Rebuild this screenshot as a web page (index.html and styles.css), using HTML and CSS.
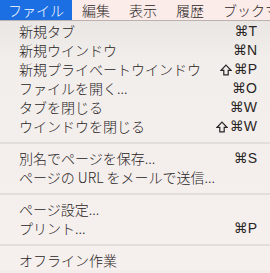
FILE: index.html
```html
<!DOCTYPE html>
<html lang="ja">
<head>
<meta charset="utf-8">
<link rel="stylesheet" href="styles.css">
</head>
<body>
<div class="menubar">
  <span class="mitem active">ファイル</span>
  <span class="mitem">編集</span>
  <span class="mitem">表示</span>
  <span class="mitem">履歴</span>
  <span class="mitem">ブックマーク</span>
</div>
<div class="menu">
  <div class="row"><span>新規タブ</span><span class="key">⌘T</span></div>
  <div class="row"><span>新規ウインドウ</span><span class="key">⌘N</span></div>
  <div class="row"><span>新規プライベートウインドウ</span><span class="key"><svg class="shift" viewBox="0 0 12 12" width="12" height="12"><path d="M6 1.2 L11 6.4 H8.2 V10.8 H3.8 V6.4 H1 Z"/></svg>⌘P</span></div>
  <div class="row"><span>ファイルを開く...</span><span class="key">⌘O</span></div>
  <div class="row"><span>タブを閉じる</span><span class="key">⌘W</span></div>
  <div class="row"><span>ウインドウを閉じる</span><span class="key"><svg class="shift" viewBox="0 0 12 12" width="12" height="12"><path d="M6 1.2 L11 6.4 H8.2 V10.8 H3.8 V6.4 H1 Z"/></svg>⌘W</span></div>
  <div class="sep"></div>
  <div class="row"><span>別名でページを保存...</span><span class="key">⌘S</span></div>
  <div class="row"><span>ページの URL をメールで送信...</span></div>
  <div class="sep"></div>
  <div class="row"><span>ページ設定...</span></div>
  <div class="row"><span>プリント...</span><span class="key">⌘P</span></div>
  <div class="sep"></div>
  <div class="row"><span>オフライン作業</span></div>
</div>
</body>
</html>
```
FILE: styles.css
```css
html, body {
  margin: 0;
  padding: 0;
}
body {
  width: 270px;
  height: 273px;
  overflow: hidden;
  font-family: "Noto Sans CJK JP", "Noto Sans", sans-serif;
  font-weight: 300;
  color: #2a2525;
  background: #f3ecea;
}
.menubar {
  display: flex;
  height: 20px;
  background: #fbecea;
  border-bottom: 1px solid #b9b2b0;
  white-space: nowrap;
  overflow: hidden;
}
.mitem {
  font-size: 14px;
  line-height: 20px;
  padding: 0 9px 0 9px;
  margin-right: 1px;
  color: #2a2424;
}
.mitem.active {
  background: #1c6fe3;
  color: #fff;
  padding: 0 9px 0 8px;
  width: 55px;
}
.menu {
  padding-top: 1px;
  background: linear-gradient(#e9e6e4 0px, #f2eeec 40px, #f6f0ee 273px);
}
.row {
  display: flex;
  justify-content: space-between;
  align-items: center;
  height: 19px;
  padding: 0 13px 0 19px;
  font-size: 14px;
  line-height: 19px;
  white-space: nowrap;
}
.key {
  display: flex;
  align-items: center;
  font-family: "Liberation Sans", "DejaVu Sans", sans-serif;
  font-weight: 400;
  font-size: 14px;
}
.shift {
  margin-right: 2px;
  fill: none;
  stroke: #2a2525;
  stroke-width: 1.2;
  stroke-linejoin: miter;
}
.sep {
  height: 2px;
  margin: 6px 0 5px;
  background: #e2dedc;
}
```
